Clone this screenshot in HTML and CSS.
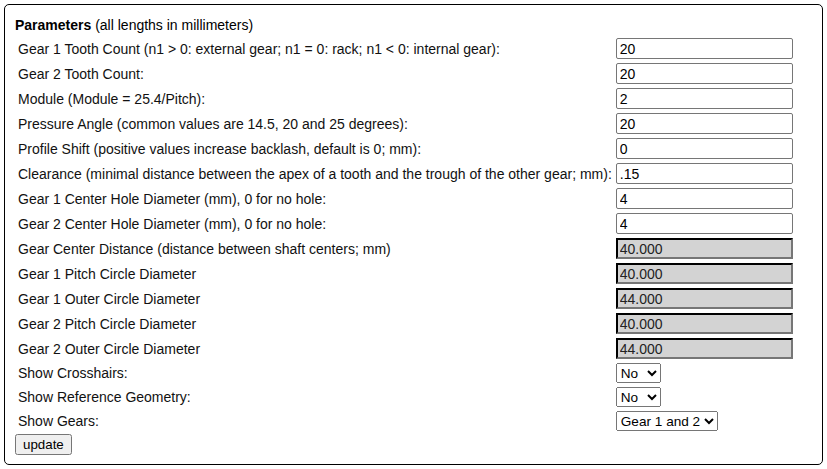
FILE: index.html
```html
<!DOCTYPE html>
<html>
<head>
<meta charset="utf-8">
<link rel="stylesheet" href="styles.css">
</head>
<body>
<div class="params">
  <div class="caption"><b>Parameters</b> (all lengths in millimeters)</div>
  <table class="ptable">
    <tr><td>Gear 1 Tooth Count (n1 &gt; 0: external gear; n1 = 0: rack; n1 &lt; 0: internal gear):</td><td><input class="field" type="text" value="20"></td></tr>
    <tr><td>Gear 2 Tooth Count:</td><td><input class="field" type="text" value="20"></td></tr>
    <tr><td>Module (Module = 25.4/Pitch):</td><td><input class="field" type="text" value="2"></td></tr>
    <tr><td>Pressure Angle (common values are 14.5, 20 and 25 degrees):</td><td><input class="field" type="text" value="20"></td></tr>
    <tr><td>Profile Shift (positive values increase backlash, default is 0; mm):</td><td><input class="field" type="text" value="0"></td></tr>
    <tr><td>Clearance (minimal distance between the apex of a tooth and the trough of the other gear; mm):</td><td><input class="field" type="text" value=".15"></td></tr>
    <tr><td>Gear 1 Center Hole Diameter (mm), 0 for no hole:</td><td><input class="field" type="text" value="4"></td></tr>
    <tr><td>Gear 2 Center Hole Diameter (mm), 0 for no hole:</td><td><input class="field" type="text" value="4"></td></tr>
    <tr><td>Gear Center Distance (distance between shaft centers; mm)</td><td><input class="field ro" type="text" value="40.000" readonly></td></tr>
    <tr><td>Gear 1 Pitch Circle Diameter</td><td><input class="field ro" type="text" value="40.000" readonly></td></tr>
    <tr><td>Gear 1 Outer Circle Diameter</td><td><input class="field ro" type="text" value="44.000" readonly></td></tr>
    <tr><td>Gear 2 Pitch Circle Diameter</td><td><input class="field ro" type="text" value="40.000" readonly></td></tr>
    <tr><td>Gear 2 Outer Circle Diameter</td><td><input class="field ro" type="text" value="44.000" readonly></td></tr>
    <tr><td>Show Crosshairs:</td><td><select class="choice"><option>No</option><option>Yes</option></select></td></tr>
    <tr><td>Show Reference Geometry:</td><td><select class="choice"><option>No</option><option>Yes</option></select></td></tr>
    <tr><td>Show Gears:</td><td><select class="choice"><option>Gear 1 and 2</option><option>Gear 1 only</option><option>Gear 2 only</option></select></td></tr>
  </table>
  <button class="update" type="button">update</button>
</div>
</body>
</html>
```
FILE: styles.css
```css
html, body {
  margin: 0;
  padding: 0;
}
body {
  margin: 4px;
  font-family: "Liberation Sans", Arial, sans-serif;
  font-size: 14px;
  color: #111;
  background: #fff;
}
.params {
  border: 1px solid #000;
  border-radius: 5px;
  padding: 12px 10px 11px 10px;
  box-sizing: border-box;
  height: 461px;
}
.caption {
  margin-bottom: 2px;
  line-height: 16px;
  color: #000;
}
.ptable {
  border-collapse: separate;
  border-spacing: 2px;
  font-size: 14px;
}
.ptable td {
  padding: 1px;
  white-space: nowrap;
}
.field {
  font-family: "Liberation Sans", Arial, sans-serif;
  font-size: 14px;
  width: 177px;
  height: 21px;
  box-sizing: border-box;
  margin: 0;
  padding: 1px 3px;
  border: 1px solid #767676;
  border-radius: 2px;
  background: #fff;
  color: #000;
  display: block;
}
.field.ro {
  background: #d3d3d3;
  border: 2px inset #767676;
  border-top-color: #1e1e1e;
  border-left-color: #1e1e1e;
  border-radius: 0;
  padding: 1px 2px;
  color: #222;
}
.choice {
  font-family: "Liberation Sans", Arial, sans-serif;
  font-size: 13.6px;
  margin: 0;
  height: 20px;
  display: block;
  color: #000;
}
.update {
  font-family: "Liberation Sans", Arial, sans-serif;
  font-size: 13.333px;
  margin: 0;
  color: #000;
}
```
